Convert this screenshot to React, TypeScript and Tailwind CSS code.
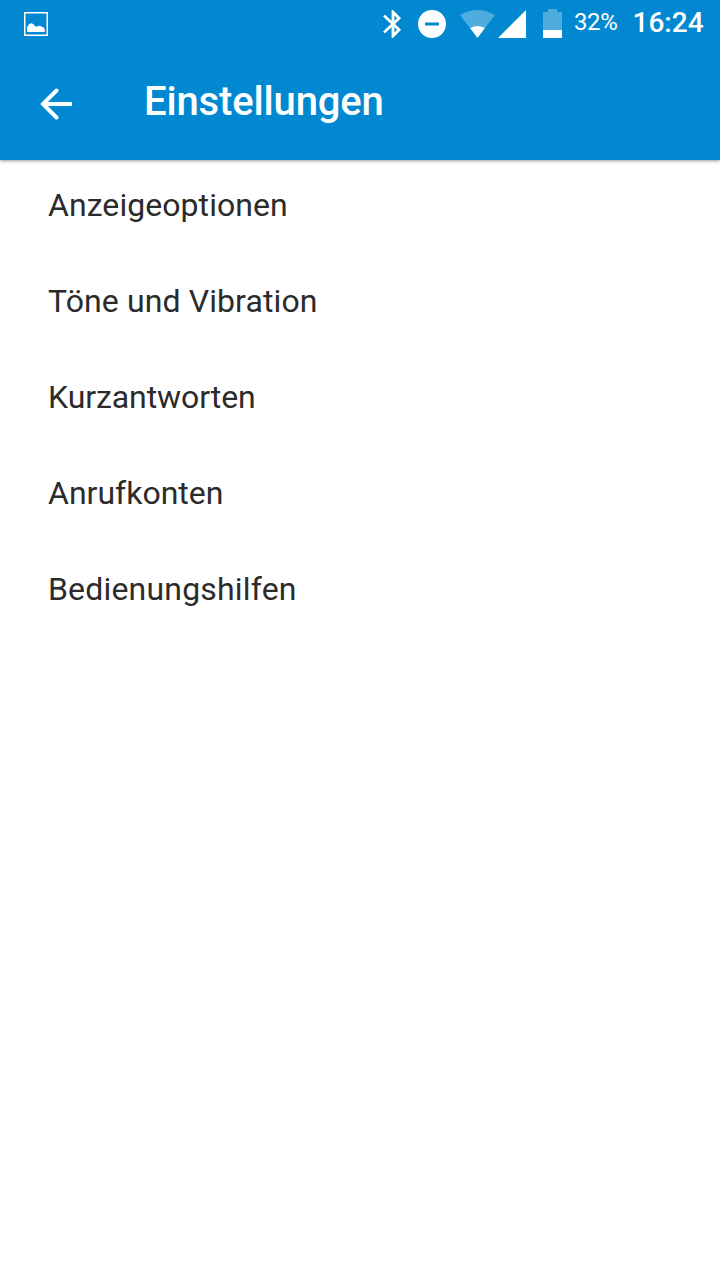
const items = [
  { label: 'Anzeigeoptionen', tracking: 'tracking-[0.06px]' },
  { label: 'Töne und Vibration', tracking: 'tracking-[0.11px]' },
  { label: 'Kurzantworten', tracking: 'tracking-[-0.08px]' },
  { label: 'Anrufkonten', tracking: 'tracking-normal' },
  { label: 'Bedienungshilfen', tracking: 'tracking-[0.18px]' },
];

function StatusBar() {
  return (
    <div className="flex h-12 items-start pl-6">
      <svg className="mt-3 h-6 w-6 shrink-0" viewBox="0 0 24 24" fill="none">
        <rect x="0.75" y="0.75" width="22.500" height="22.500" stroke="white" strokeWidth="1.500" />
        <path d="M3 20v-4.500Q7 8 11 14q1 1 2 .5 3-1.500 5 .5 3 0 3 5z" fill="white" />
      </svg>
      <svg className="ml-[328px] mt-2 h-8 w-[34px] shrink-0" viewBox="0 0 24 24" preserveAspectRatio="none" fill="white">
        <path d="M17.71 7.71L12 1.500h-1v8.090L6.41 5 5 6.41 10.59 12 5 17.59 6.41 19 11 14.41V22.500h1l5.71-6.210-4.3-4.29 4.3-4.29zM13 5.830l1.88 1.88L13 9.590V5.830zm1.88 10.460L13 18.170v-3.760l1.88 1.88z" />
      </svg>
      <svg className="ml-2 mt-2 h-8 w-8 shrink-0" viewBox="0 0 32 32">
        <circle cx="14" cy="16" r="14" fill="white" />
        <path d="M7 14.500h14v3H7z" fill="#0288d1" />
      </svg>
      <svg className="ml-[10px] mt-[9px] h-[30px] w-[35px] shrink-0" viewBox="0 0 35 30" fill="white">
        <path d="M0 6Q17.500-4 35 6L25 19Q17.500 15 10 19z" fillOpacity=".3" />
        <path d="M10 19Q17.500 15 25 19L17.500 29z" />
      </svg>
      <svg className="ml-[3px] mt-[10px] h-7 w-7 shrink-0" viewBox="0 0 28 28" fill="white">
        <path d="M28 0v28H0z" />
      </svg>
      <svg className="ml-[17px] mt-[9px] h-[30px] w-[19px] shrink-0" viewBox="0 0 19 30" fill="white">
        <path d="M5 0h9v3h5v18H0V3h5z" fillOpacity=".3" />
        <path d="M0 21h19v8H0z" />
      </svg>
      <span className="ml-3 mt-[6px] w-11 whitespace-nowrap text-[24px] leading-8 tracking-[-0.4px]">32%</span>
      <span className="ml-[14.500px] mt-[7px] whitespace-nowrap text-[28px] font-medium leading-8">16:24</span>
    </div>
  );
}

export default function App() {
  return (
    <div className="flex h-[1280px] w-[720px] flex-col overflow-hidden bg-white font-[Roboto,sans-serif]">
      <header className="z-10 flex h-40 shrink-0 flex-col bg-[#0288d1] text-white shadow-[0_1px_3px_rgba(0,0,0,0.4)]">
        <StatusBar />
        <div className="flex h-28 items-center pl-10">
          <svg className="h-8 w-8" viewBox="0 0 32 32" fill="none" stroke="white" strokeWidth="4">
            <path d="M32 16H4" />
            <path d="M16.500 2.500L3 16l13.500 13.500" strokeLinecap="round" />
          </svg>
          <h1 className="mb-1 ml-[72px] text-[40px] font-medium leading-[48px] tracking-[-0.15px]">Einstellungen</h1>
        </div>
      </header>
      <main className="flex flex-col">
        {items.map(({ label, tracking }) => (
          <button key={label} className="flex h-24 items-center pb-[6px] pl-12 text-left text-[32px] leading-10 text-[#2b2b2b]">
            <span className={tracking}>{label}</span>
          </button>
        ))}
      </main>
    </div>
  );
}
